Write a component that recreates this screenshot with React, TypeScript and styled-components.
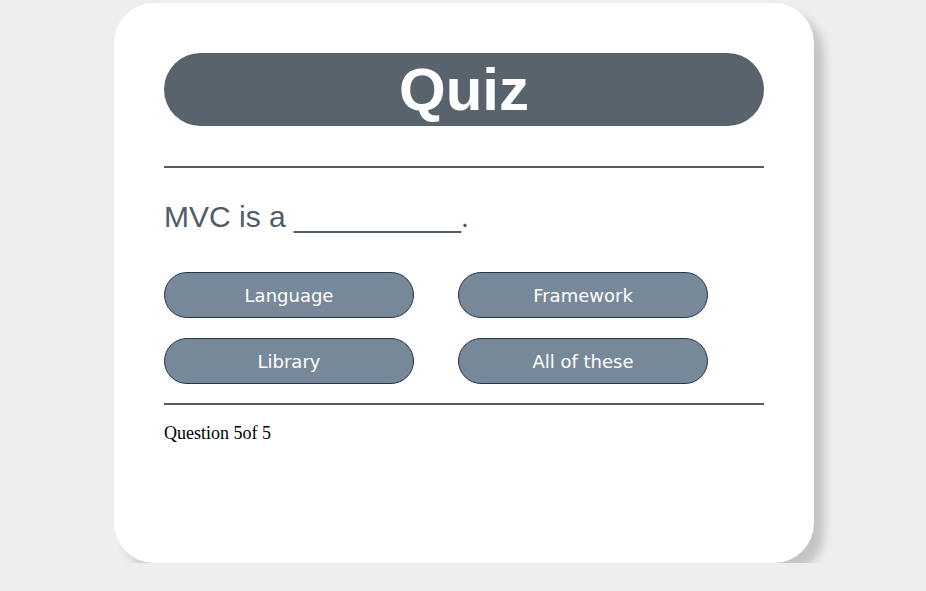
import React from 'react'
import styled, { createGlobalStyle } from 'styled-components'

const options = ['Language', 'Framework', 'Library', 'All of these']

export default function App() {
  return (
    <>
      <GlobalStyle />
      <Card>
        <Title>Quiz</Title>
        <Rule />
        <Question>MVC is a __________.</Question>
        <Options>
          {options.map((o) => (
            <Option key={o}>{o}</Option>
          ))}
        </Options>
        <Rule $tight />
        <Progress>Question 5of 5</Progress>
      </Card>
    </>
  )
}

const GlobalStyle = createGlobalStyle`
  html, body {
    margin: 0;
    background: #eeeeee;
  }
  body {
    padding: 3px 0 0 2px;
  }
`

const Card = styled.div`
  box-sizing: border-box;
  width: 700px;
  height: 560px;
  margin: 0 auto;
  padding: 50px;
  background: #ffffff;
  border-radius: 40px;
  box-shadow: 10px 10px 10px #c4c4c4;
`

const Title = styled.h1`
  margin: 0;
  height: 73px;
  line-height: 73px;
  border-radius: 37px;
  background: #58636e;
  color: #ffffff;
  text-align: center;
  font-family: 'Liberation Sans', Arial, sans-serif;
  font-size: 60px;
  font-weight: bold;
`

const Rule = styled.hr<{ $tight?: boolean }>`
  margin: ${(p) => (p.$tight ? '19px 0 18px' : '40px 0 32px')};
  border: 0;
  border-top: 2px solid #5a5a5a;
`

const Question = styled.div`
  font-family: 'Liberation Sans', Arial, sans-serif;
  font-size: 30px;
  color: #4f5c69;
  margin-bottom: 38px;
`

const Options = styled.div`
  display: grid;
  grid-template-columns: 250px 250px;
  column-gap: 44px;
  row-gap: 20px;
`

const Option = styled.button`
  box-sizing: border-box;
  height: 46px;
  border: 1px solid #1d3557;
  border-radius: 23px;
  background: #778899;
  color: #ffffff;
  font-family: 'DejaVu Sans', Tahoma, sans-serif;
  font-size: 18px;
  padding: 0;
  cursor: pointer;
`

const Progress = styled.div`
  font-family: 'Liberation Serif', 'Times New Roman', serif;
  font-size: 18px;
  color: #000000;
`
